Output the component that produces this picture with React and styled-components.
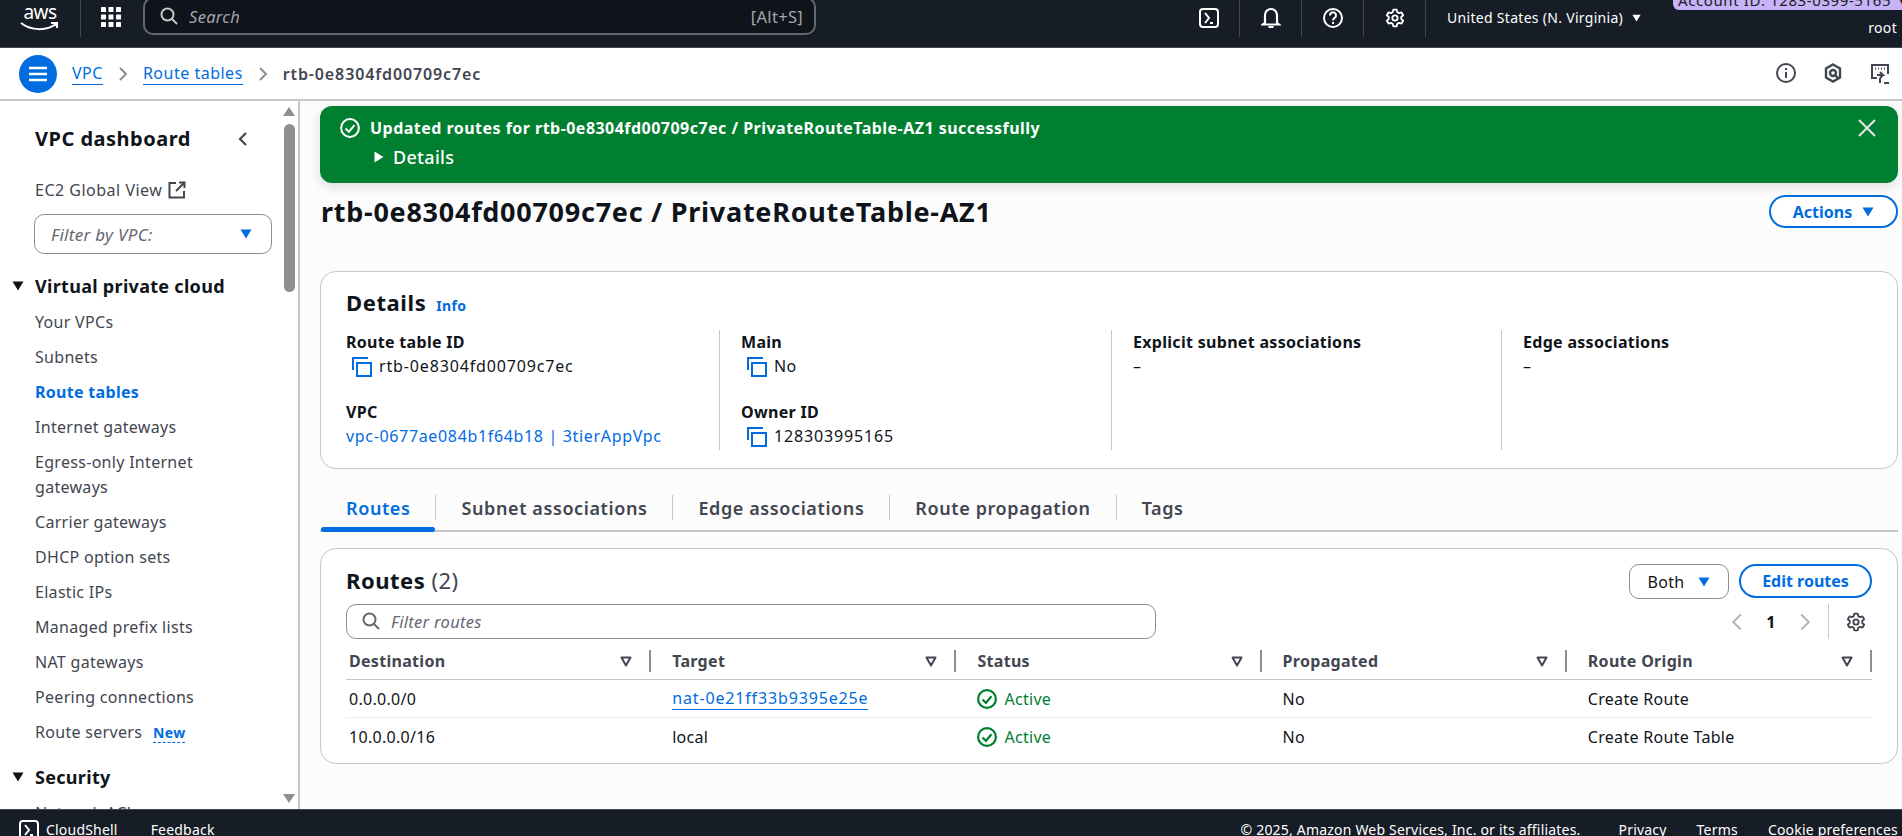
import React from "react";
import styled, { createGlobalStyle } from "styled-components";

const blue = "#006ce0";
const ink = "#0f141a";
const grey = "#424650";

const GlobalStyle = createGlobalStyle`
  html, body {
    margin: 0;
    padding: 0;
    height: 836px;
    overflow: hidden;
    background: #fcfcfc;
    font-family: "Noto Sans", "Open Sans", sans-serif;
    font-size: 16px;
    letter-spacing: 0.3px;
    color: ${ink};
  }
  * {
    box-sizing: border-box;
  }
`;

const Page = styled.div`
  display: flex;
  flex-direction: column;
  height: 836px;
  overflow: hidden;
`;

// IDs are mostly digits, which run wider in the reference
const Id = styled.span`
  letter-spacing: ${({ $tight }) => ($tight ? 0.66 : 0.85)}px;
`;

// Top navigation
const TopNav = styled.header`
  flex: none;
  height: 48px;
  display: flex;
  align-items: flex-start;
  background: #161d26;
  border-bottom: 1px solid #424650;
  color: #fff;
  overflow: hidden;
`;

const LogoBox = styled.div`
  width: 81px;
  height: 37px;
  flex: none;
  padding-left: 20px;
  border-right: 1px solid #424650;
`;

const LogoText = styled.span`
  display: block;
  width: 40px;
  text-align: center;
  font-size: 19px;
  line-height: 19px;
  margin-top: 3px;
  letter-spacing: -0.5px;
`;

const LogoSmile = styled.svg`
  display: block;
`;

const WaffleBox = styled.div`
  flex: none;
  display: flex;
  width: 62px;
  padding: 7px 0 0 20px;
`;

const SearchBox = styled.div`
  flex: none;
  width: 673px;
  height: 38px;
  margin-top: -3px;
  padding: 0 11px 0 15px;
  display: flex;
  align-items: center;
  gap: 11px;
  background: #0f141a;
  border: 2px solid #656871;
  border-radius: 10px;
  font-size: 16.5px;
  color: #a4a4ad;
`;

const SearchHint = styled.span`
  font-style: italic;
  flex: 1;
`;

const NavIcons = styled.div`
  flex: none;
  margin-left: 362px;
  display: flex;
  height: 37px;
`;

const NavIcon = styled.div`
  width: 62px;
  height: 37px;
  display: flex;
  align-items: center;
  justify-content: center;
  border-right: 1px solid #424650;
  & > svg {
    margin-top: -2px;
  }
`;

const Region = styled.div`
  flex: none;
  width: 247px;
  padding: 7px 0 0 21px;
  display: flex;
  align-items: center;
  gap: 9px;
  font-size: 14px;
  line-height: 22px;
`;

const AccountBox = styled.div`
  flex: 1;
  min-width: 0;
  display: flex;
  flex-direction: column;
  align-items: flex-end;
`;

const AccountPill = styled.div`
  width: 100%;
  height: 10px;
  display: flex;
  align-items: flex-end;
  overflow: hidden;
  padding-left: 5px;
  background: #c7b3f5;
  border-radius: 0 0 0 6px;
  color: #161d26;
  font-size: 15px;
  letter-spacing: 0.6px;
  line-height: 20px;
  white-space: nowrap;
`;

const RootName = styled.span`
  font-size: 14px;
  line-height: 20px;
  margin: 8px 5px 0 0;
`;

// Breadcrumb bar
const CrumbBar = styled.div`
  flex: none;
  height: 53px;
  display: flex;
  align-items: center;
  padding: 0 12px 0 19px;
  background: #fff;
  border-bottom: 2px solid #c6c6cd;
`;

const MenuButton = styled.div`
  width: 38px;
  height: 38px;
  border-radius: 50%;
  background: ${blue};
  display: flex;
  align-items: center;
  justify-content: center;
  margin-right: 15px;
`;

const CrumbLink = styled.a`
  color: ${blue};
  font-size: 16px;
  letter-spacing: 0.5px;
  line-height: 22px;
  border-bottom: 1px solid ${blue};
`;

const CrumbSep = styled.span`
  display: flex;
  width: 40px;
  justify-content: center;
`;

const CrumbCurrent = styled.span`
  color: ${grey};
  font-size: 16px;
  font-weight: 600;
  letter-spacing: 0.87px;
`;

const CrumbTools = styled.div`
  margin-left: auto;
  display: flex;
  gap: 28px;
`;

// Body
const Body = styled.div`
  flex: 1;
  min-height: 0;
  display: flex;
`;

const Sidebar = styled.nav`
  flex: none;
  width: 300px;
  padding: 24px 0 0 35px;
  background: #fff;
  border-right: 2px solid #c6c6cd;
  overflow: hidden;
  position: relative;
`;

const SideTitleRow = styled.div`
  width: 216px;
  height: 28px;
  display: flex;
  align-items: center;
  justify-content: space-between;
  font-size: 20px;
  font-weight: 700;
  letter-spacing: 0.5px;
  line-height: 28px;
`;

const GlobalView = styled.div`
  margin-top: 25px;
  display: flex;
  align-items: center;
  gap: 6px;
  color: ${grey};
  font-size: 16px;
  letter-spacing: 0.5px;
  line-height: 24px;
`;

const VpcSelect = styled.div`
  margin: 12px 0 0 -1px;
  width: 238px;
  height: 40px;
  padding: 0 19px 0 16px;
  display: flex;
  align-items: center;
  justify-content: space-between;
  border: 1px solid #8c8c94;
  border-radius: 10px;
  background: #fff;
  font-size: 17px;
  font-style: italic;
  color: #656871;
`;

const SideSection = styled.div`
  position: relative;
  margin-top: 20px;
  margin-bottom: 12px;
  font-size: 18px;
  font-weight: 700;
  line-height: 24px;
  & > svg {
    position: absolute;
    left: -23px;
    top: 7px;
  }
`;

const SideLink = styled.a`
  display: block;
  width: 215px;
  margin-bottom: 10px;
  font-size: 16px;
  line-height: 25px;
  color: ${({ $active }) => ($active ? blue : grey)};
  font-weight: ${({ $active }) => ($active ? 700 : 400)};
`;

const NewTag = styled.span`
  margin-left: 11px;
  color: ${blue};
  font-size: 14px;
  font-weight: 700;
  line-height: 18px;
  display: inline-block;
  border-bottom: 1px dashed ${blue};
`;

const ScrollThumb = styled.div`
  position: absolute;
  left: 284px;
  top: 23px;
  width: 11px;
  height: 168px;
  border-radius: 6px;
  background: #8f8f8f;
`;

const ScrollArrow = styled.div`
  position: absolute;
  left: 283px;
  top: ${({ $top }) => $top}px;
  width: 0;
  height: 0;
  border-left: 6.5px solid transparent;
  border-right: 6.5px solid transparent;
  ${({ $down }) => ($down ? "border-top" : "border-bottom")}: 9px solid #8f8f8f;
`;

const Main = styled.main`
  flex: 1;
  min-width: 0;
  padding: 5px 4px 0 20px;
  background: #fcfcfc;
`;

const Flash = styled.div`
  height: 77px;
  padding: 8px 22px 0 20px;
  display: flex;
  gap: 10px;
  background: #007f30;
  border-radius: 12px;
  box-shadow: 0 4px 12px rgba(0, 7, 22, 0.12);
  color: #fff;
  font-size: 16px;
  line-height: 28px;
`;

const FlashIcon = styled.span`
  display: flex;
  margin-top: 4px;
`;

const FlashBody = styled.div`
  flex: 1;
`;

const FlashTitle = styled.div`
  font-weight: 700;
  letter-spacing: 0.47px;
`;

const FlashDetails = styled.div`
  display: flex;
  align-items: center;
  gap: 9px;
  margin: 1px 0 0 4px;
  font-size: 18px;
  font-weight: 500;
`;

const FlashClose = styled.span`
  display: flex;
  margin-top: 5px;
`;

const HeaderRow = styled.div`
  display: flex;
  align-items: center;
  justify-content: space-between;
  margin-top: 12px;
  height: 33px;
`;

const PageTitle = styled.h1`
  margin: 0 0 0 1px;
  font-size: 27px;
  font-weight: 700;
  letter-spacing: 0.73px;
  line-height: 32px;
`;

const OutlineButton = styled.button`
  height: ${({ $h }) => $h}px;
  width: ${({ $w }) => $w}px;
  display: flex;
  align-items: center;
  justify-content: center;
  gap: 10px;
  padding: 0;
  background: #fff;
  border: 2px solid ${blue};
  border-radius: 20px;
  color: ${blue};
  font: 700 16px "Noto Sans", sans-serif;
`;

const Card = styled.section`
  background: #fff;
  border: 1px solid #c6c6cd;
  border-radius: 16px;
`;

const DetailsCard = styled(Card)`
  margin-top: 43px;
  height: 198px;
  padding: 15px 25px 0;
`;

const CardHeading = styled.h2`
  margin: 0;
  display: flex;
  align-items: baseline;
  gap: 10px;
  font-size: 22px;
  font-weight: 700;
  letter-spacing: 0.6px;
  line-height: 30px;
`;

const InfoLink = styled.a`
  color: ${blue};
  font-size: 14px;
  font-weight: 700;
  letter-spacing: 0.3px;
`;

const DetailGrid = styled.div`
  margin-top: 9px;
  display: grid;
  grid-template-columns: 373px 392px 390px 1fr;
`;

const DetailColumn = styled.div`
  height: 120px;
  padding-left: ${({ $first }) => ($first ? 0 : 21)}px;
  border-left: ${({ $first }) => ($first ? "none" : "1px solid #c6c6cd")};
`;

const DetailItem = styled.div`
  height: 70px;
`;

const DetailLabel = styled.div`
  font-size: 16px;
  font-weight: 700;
  line-height: 24px;
`;

const DetailValue = styled.div`
  display: flex;
  align-items: center;
  gap: 7px;
  padding-left: ${({ $icon }) => ($icon ? 5 : 0)}px;
  font-size: 16px;
  line-height: 24px;
`;

const ValueLink = styled.a`
  color: ${blue};
`;

const TabBar = styled.div`
  margin-top: 21px;
  height: 42px;
  padding: 5px 0 0 1px;
  display: flex;
  align-items: flex-start;
  border-bottom: 2px solid #c6c6cd;
`;

const Tab = styled.div`
  position: relative;
  height: 25px;
  padding: 0 25px;
  display: flex;
  align-items: center;
  font-size: 18px;
  font-weight: 600;
  letter-spacing: 0.6px;
  color: ${({ $active }) => ($active ? blue : grey)};
  border-right: ${({ $last }) => ($last ? "none" : "1px solid #c6c6cd")};
  ${({ $active }) =>
    $active &&
    `&::after {
      content: "";
      position: absolute;
      left: 0;
      right: 0;
      bottom: -12px;
      height: 5px;
      border-radius: 3px;
      background: ${blue};
    }`}
`;

const RoutesCard = styled(Card)`
  margin-top: 16px;
  height: 216px;
  padding: 15px 25px 0;
`;

const RoutesTop = styled.div`
  display: flex;
  align-items: flex-start;
  justify-content: space-between;
  height: 40px;
`;

const RoutesTitle = styled.h2`
  margin: 0;
  font-size: 22px;
  font-weight: 700;
  letter-spacing: 0.5px;
  line-height: 32px;
`;

const RoutesCount = styled.span`
  font-weight: 400;
  color: ${grey};
`;

const RoutesActions = styled.div`
  display: flex;
  gap: 10px;
`;

const BothSelect = styled.div`
  width: 100px;
  height: 35px;
  display: flex;
  align-items: center;
  justify-content: center;
  gap: 14px;
  border: 1px solid #8c8c94;
  border-radius: 10px;
  background: #fff;
`;

const FilterRow = styled.div`
  display: flex;
  justify-content: space-between;
  height: 35px;
`;

const FilterInput = styled.div`
  width: 810px;
  height: 35px;
  padding: 0 0 1px 15px;
  display: flex;
  align-items: center;
  gap: 11px;
  border: 1px solid #8c8c94;
  border-radius: 10px;
  font-size: 16.5px;
  font-style: italic;
  color: #656871;
`;

const Pager = styled.div`
  display: flex;
  align-items: center;
  height: 35px;
`;

const PagerNumber = styled.span`
  width: 48px;
  text-align: center;
  font-weight: 700;
  font-size: 16px;
`;

const PagerGear = styled.div`
  height: 35px;
  margin-left: 13px;
  padding: 0 6px 0 17px;
  display: flex;
  align-items: center;
  border-left: 1px solid #c6c6cd;
`;

const TableRow = styled.div`
  display: grid;
  grid-template-columns: repeat(5, 1fr);
  height: ${({ $h }) => $h}px;
  align-items: center;
  border-bottom: ${({ $plain }) => ($plain ? "none" : "1px solid #ebebf0")};
`;

const TableHead = styled(TableRow)`
  margin-top: 11px;
  align-items: flex-start;
  border-bottom: 1px solid #c6c6cd;
`;

const HeadCell = styled.div`
  height: 22px;
  padding: 0 17px 0 ${({ $first }) => ($first ? 3 : 21)}px;
  display: flex;
  align-items: center;
  justify-content: space-between;
  border-right: 2px solid #8c8c94;
  color: ${grey};
  font-size: 16px;
  font-weight: 700;
`;

const Cell = styled.div`
  display: flex;
  align-items: center;
  gap: 7px;
  padding-left: ${({ $first }) => ($first ? 3 : 21)}px;
  font-size: 16px;
  line-height: 24px;
`;

const TargetLink = styled.a`
  color: ${blue};
  border-bottom: 1px solid ${blue};
  line-height: 22px;
`;

const ActiveText = styled.span`
  color: #00802f;
`;

const Footer = styled.footer`
  flex: none;
  height: 27px;
  display: flex;
  align-items: flex-start;
  padding: 10px 4px 0 19px;
  background: #161d26;
  border-top: 1px solid #424650;
  color: #fff;
  font-size: 14px;
  letter-spacing: 0.2px;
  line-height: 20px;
  overflow: hidden;
`;

const FooterShell = styled.span`
  display: flex;
  align-items: flex-start;
  gap: 7px;
  margin-right: 33px;
`;

const FooterCopy = styled.span`
  margin-left: auto;
  margin-right: 38px;
`;

const FooterLink = styled.span`
  margin-left: ${({ $gap }) => $gap}px;
`;

const Caret = ({ color = blue, w = 12, h = 10 }) => (
  <svg width={w} height={h} viewBox="0 0 12 10">
    <path d="M0.5 0.5h11L6 9.5z" fill={color} />
  </svg>
);

const Chevron = ({ left, color = "#8c8c94", size = 16, weight = 2 }) => (
  <svg width={size} height={size} viewBox="0 0 16 16" fill="none" stroke={color} strokeWidth={weight}>
    <path d={left ? "M11 2L5 8l6 6" : "M5 2l6 6-6 6"} />
  </svg>
);

const SearchIcon = ({ color, size = 18 }) => (
  <svg width={size} height={size} viewBox="0 0 18 18" fill="none" stroke={color} strokeWidth="2">
    <circle cx="7.5" cy="7.5" r="6" />
    <path d="M12 12l5 5" />
  </svg>
);

const ShellIcon = ({ size = 20 }) => (
  <svg width={size} height={size} viewBox="0 0 20 20" fill="none" stroke="#fff" strokeWidth="2">
    <rect x="1" y="1" width="18" height="18" rx="3" />
    <path d="M6 5l4 5-4 5M11 15h3" />
  </svg>
);

const GearIcon = ({ color = "#fff", size = 20 }) => (
  <svg width={size} height={size} viewBox="0 0 24 24" fill="none" stroke={color} strokeWidth="2.2" strokeLinejoin="round">
    <path d="M10 2h4l.7 3 2.1 1.2 3-.9 2 3.4-2.3 2.1v2.400l2.3 2.100-2 3.400-3-.9-2.100 1.200-.7 3h-4l-.7-3-2.100-1.200-3 .9-2-3.400 2.300-2.100v-2.400L2.200 8.700l2-3.400 3 .9L9.300 5z" />
    <circle cx="12" cy="12" r="3.2" />
  </svg>
);

const CopyIcon = () => (
  <svg width="21" height="21" viewBox="0 0 21 21" fill="none" stroke={blue} strokeWidth="2">
    <path d="M2 14V2h15" />
    <rect x="6" y="7" width="14" height="13" />
  </svg>
);

const SortIcon = () => (
  <svg width="12" height="11" viewBox="0 0 12 11" fill="none" stroke={grey} strokeWidth="2" strokeLinejoin="round">
    <path d="M1.500 1.500h9L6 9.500z" />
  </svg>
);

const CheckCircle = ({ color, size = 18, weight = 2 }) => (
  <svg width={size} height={size} viewBox="0 0 18 18" fill="none" stroke={color} strokeWidth={weight}>
    <circle cx="9" cy="9" r="8" />
    <path d="M5 9.500l3 3 5-6" />
  </svg>
);

const sideItems = [
  "Your VPCs",
  "Subnets",
  "Route tables",
  "Internet gateways",
  "Egress-only Internet gateways",
  "Carrier gateways",
  "DHCP option sets",
  "Elastic IPs",
  "Managed prefix lists",
  "NAT gateways",
  "Peering connections",
];

const tabs = ["Routes", "Subnet associations", "Edge associations", "Route propagation", "Tags"];
const columns = ["Destination", "Target", "Status", "Propagated", "Route Origin"];

const routes = [
  { destination: "0.0.0.0/0", target: "nat-0e21ff33b9395e25e", link: true, origin: "Create Route" },
  { destination: "10.0.0.0/16", target: "local", link: false, origin: "Create Route Table" },
];

export default function App() {
  return (
    <Page>
      <GlobalStyle />
      <TopNav>
        <LogoBox>
          <LogoText>aws</LogoText>
          <LogoSmile width="40" height="9" viewBox="0 0 40 9" fill="none" stroke="#fff" strokeWidth="2">
            <path d="M1 1c10 8 26 8 35 1M31 1h6v5" />
          </LogoSmile>
        </LogoBox>
        <WaffleBox>
          <svg width="20" height="20" viewBox="0 0 20 20" fill="#fff">
            {[0, 7.5, 15].map((y) =>
              [0, 7.5, 15].map((x) => <rect key={`${x}-${y}`} x={x} y={y} width="5" height="5" rx="0.6" />)
            )}
          </svg>
        </WaffleBox>
        <SearchBox>
          <SearchIcon color="#c6c6cd" />
          <SearchHint>Search</SearchHint>
          <span>[Alt+S]</span>
        </SearchBox>
        <NavIcons>
          <NavIcon>
            <ShellIcon />
          </NavIcon>
          <NavIcon>
            <svg width="20" height="22" viewBox="0 0 20 22" fill="none" stroke="#fff" strokeWidth="2.2">
              <path d="M4 16V8a6 6 0 0112 0v8l2 1.500H2zM7.500 20h5" />
            </svg>
          </NavIcon>
          <NavIcon>
            <svg width="20" height="20" viewBox="0 0 20 20" fill="none" stroke="#fff" strokeWidth="2">
              <circle cx="10" cy="10" r="9" />
              <path d="M7 7.500a3 3 0 115 2c-1.200.9-2 1.300-2 3M10 14v2" />
            </svg>
          </NavIcon>
          <NavIcon>
            <GearIcon />
          </NavIcon>
        </NavIcons>
        <Region>
          United States (N. Virginia)
          <Caret color="#fff" w={9} h={8} />
        </Region>
        <AccountBox>
          <AccountPill>Account ID: 1283-0399-5165 ▼</AccountPill>
          <RootName>root</RootName>
        </AccountBox>
      </TopNav>

      <CrumbBar>
        <MenuButton>
          <svg width="18" height="16" viewBox="0 0 18 16" fill="none" stroke="#fff" strokeWidth="2.4">
            <path d="M0 2h18M0 8h18M0 14h18" />
          </svg>
        </MenuButton>
        <CrumbLink>VPC</CrumbLink>
        <CrumbSep>
          <Chevron />
        </CrumbSep>
        <CrumbLink>Route tables</CrumbLink>
        <CrumbSep>
          <Chevron />
        </CrumbSep>
        <CrumbCurrent>rtb-0e8304fd00709c7ec</CrumbCurrent>
        <CrumbTools>
          <svg width="20" height="20" viewBox="0 0 20 20" fill="none" stroke={grey} strokeWidth="2">
            <circle cx="10" cy="10" r="9" />
            <path d="M10 9v6M10 5v2" />
          </svg>
          <svg width="18" height="20" viewBox="0 0 18 20" fill="none" stroke={grey} strokeWidth="2.4">
            <path d="M9 1.500l7 4v9l-7 4-7-4v-9z" />
            <circle cx="9" cy="10" r="3" />
            <path d="M11 12l3 3" />
          </svg>
          <svg width="20" height="22" viewBox="0 0 20 22" fill="none" stroke={grey} strokeWidth="2">
            <path d="M7 15H2V2h16v9" />
            <path d="M5 5.500h1M8 5.500h1M11 5.500h1M14 5.500h1" />
            <path d="M7 12h6l-3-3M13 12l-3 3M10 15v5M14 20h5" />
          </svg>
        </CrumbTools>
      </CrumbBar>

      <Body>
        <Sidebar>
          <SideTitleRow>
            VPC dashboard
            <Chevron left color={grey} size={16} weight={2.2} />
          </SideTitleRow>
          <GlobalView>
            EC2 Global View
            <svg width="18" height="18" viewBox="0 0 18 18" fill="none" stroke={grey} strokeWidth="2">
              <path d="M8 2H1.500v14.500H16V10M11 1.500h5.500V7M16 2L8 10" />
            </svg>
          </GlobalView>
          <VpcSelect>
            Filter by VPC:
            <Caret />
          </VpcSelect>
          <SideSection>
            <Caret color={ink} />
            Virtual private cloud
          </SideSection>
          {sideItems.map((item) => (
            <SideLink key={item} $active={item === "Route tables"}>
              {item}
            </SideLink>
          ))}
          <SideLink>
            Route servers
            <NewTag>New</NewTag>
          </SideLink>
          <SideSection>
            <Caret color={ink} />
            Security
          </SideSection>
          <SideLink>Network ACLs</SideLink>
          <ScrollArrow $top={6} />
          <ScrollThumb />
          <ScrollArrow $top={693} $down />
        </Sidebar>

        <Main>
          <Flash>
            <FlashIcon>
              <CheckCircle color="#fff" size={20} weight={1.8} />
            </FlashIcon>
            <FlashBody>
              <FlashTitle>Updated routes for rtb-0e8304fd00709c7ec / PrivateRouteTable-AZ1 successfully</FlashTitle>
              <FlashDetails>
                <svg width="10" height="12" viewBox="0 0 10 12">
                  <path d="M0.500 0.500v11L9.500 6z" fill="#fff" />
                </svg>
                Details
              </FlashDetails>
            </FlashBody>
            <FlashClose>
              <svg width="18" height="18" viewBox="0 0 18 18" fill="none" stroke="#e8e8e8" strokeWidth="2">
                <path d="M1 1l16 16M17 1L1 17" />
              </svg>
            </FlashClose>
          </Flash>

          <HeaderRow>
            <PageTitle>rtb-0e8304fd00709c7ec / PrivateRouteTable-AZ1</PageTitle>
            <OutlineButton $h={33} $w={129}>
              Actions
              <Caret w={12} h={10} />
            </OutlineButton>
          </HeaderRow>

          <DetailsCard>
            <CardHeading>
              Details
              <InfoLink>Info</InfoLink>
            </CardHeading>
            <DetailGrid>
              <DetailColumn $first>
                <DetailItem>
                  <DetailLabel>Route table ID</DetailLabel>
                  <DetailValue $icon>
                    <CopyIcon />
                    <Id>rtb-0e8304fd00709c7ec</Id>
                  </DetailValue>
                </DetailItem>
                <DetailItem>
                  <DetailLabel>VPC</DetailLabel>
                  <DetailValue>
                    <ValueLink>
                      <Id $tight>vpc-0677ae084b1f64b18 | 3tierAppVpc</Id>
                    </ValueLink>
                  </DetailValue>
                </DetailItem>
              </DetailColumn>
              <DetailColumn>
                <DetailItem>
                  <DetailLabel>Main</DetailLabel>
                  <DetailValue $icon>
                    <CopyIcon />
                    No
                  </DetailValue>
                </DetailItem>
                <DetailItem>
                  <DetailLabel>Owner ID</DetailLabel>
                  <DetailValue $icon>
                    <CopyIcon />
                    <Id>128303995165</Id>
                  </DetailValue>
                </DetailItem>
              </DetailColumn>
              <DetailColumn>
                <DetailItem>
                  <DetailLabel>Explicit subnet associations</DetailLabel>
                  <DetailValue>–</DetailValue>
                </DetailItem>
              </DetailColumn>
              <DetailColumn>
                <DetailItem>
                  <DetailLabel>Edge associations</DetailLabel>
                  <DetailValue>–</DetailValue>
                </DetailItem>
              </DetailColumn>
            </DetailGrid>
          </DetailsCard>

          <TabBar>
            {tabs.map((tab, i) => (
              <Tab key={tab} $active={i === 0} $last={i === tabs.length - 1}>
                {tab}
              </Tab>
            ))}
          </TabBar>

          <RoutesCard>
            <RoutesTop>
              <RoutesTitle>
                Routes <RoutesCount>(2)</RoutesCount>
              </RoutesTitle>
              <RoutesActions>
                <BothSelect>
                  Both
                  <Caret />
                </BothSelect>
                <OutlineButton $h={34} $w={133}>
                  Edit routes
                </OutlineButton>
              </RoutesActions>
            </RoutesTop>
            <FilterRow>
              <FilterInput>
                <SearchIcon color="#656871" />
                Filter routes
              </FilterInput>
              <Pager>
                <Chevron left color="#b4b4bb" size={20} weight={1.6} />
                <PagerNumber>1</PagerNumber>
                <Chevron color="#b4b4bb" size={20} weight={1.6} />
                <PagerGear>
                  <GearIcon color={grey} size={20} />
                </PagerGear>
              </Pager>
            </FilterRow>
            <TableHead $h={30}>
              {columns.map((col, i) => (
                <HeadCell key={col} $first={i === 0}>
                  {col}
                  <SortIcon />
                </HeadCell>
              ))}
            </TableHead>
            {routes.map((route, i) => (
              <TableRow key={route.destination} $h={38} $plain={i === routes.length - 1}>
                <Cell $first>{route.destination}</Cell>
                <Cell>
                  {route.link ? (
                    <TargetLink>
                      <Id>{route.target}</Id>
                    </TargetLink>
                  ) : (
                    route.target
                  )}
                </Cell>
                <Cell>
                  <CheckCircle color="#00802f" size={20} />
                  <ActiveText>Active</ActiveText>
                </Cell>
                <Cell>No</Cell>
                <Cell>{route.origin}</Cell>
              </TableRow>
            ))}
          </RoutesCard>
        </Main>
      </Body>

      <Footer>
        <FooterShell>
          <ShellIcon />
          CloudShell
        </FooterShell>
        Feedback
        <FooterCopy>© 2025, Amazon Web Services, Inc. or its affiliates.</FooterCopy>
        <FooterLink $gap={0}>Privacy</FooterLink>
        <FooterLink $gap={30}>Terms</FooterLink>
        <FooterLink $gap={30}>Cookie preferences</FooterLink>
      </Footer>
    </Page>
  );
}
